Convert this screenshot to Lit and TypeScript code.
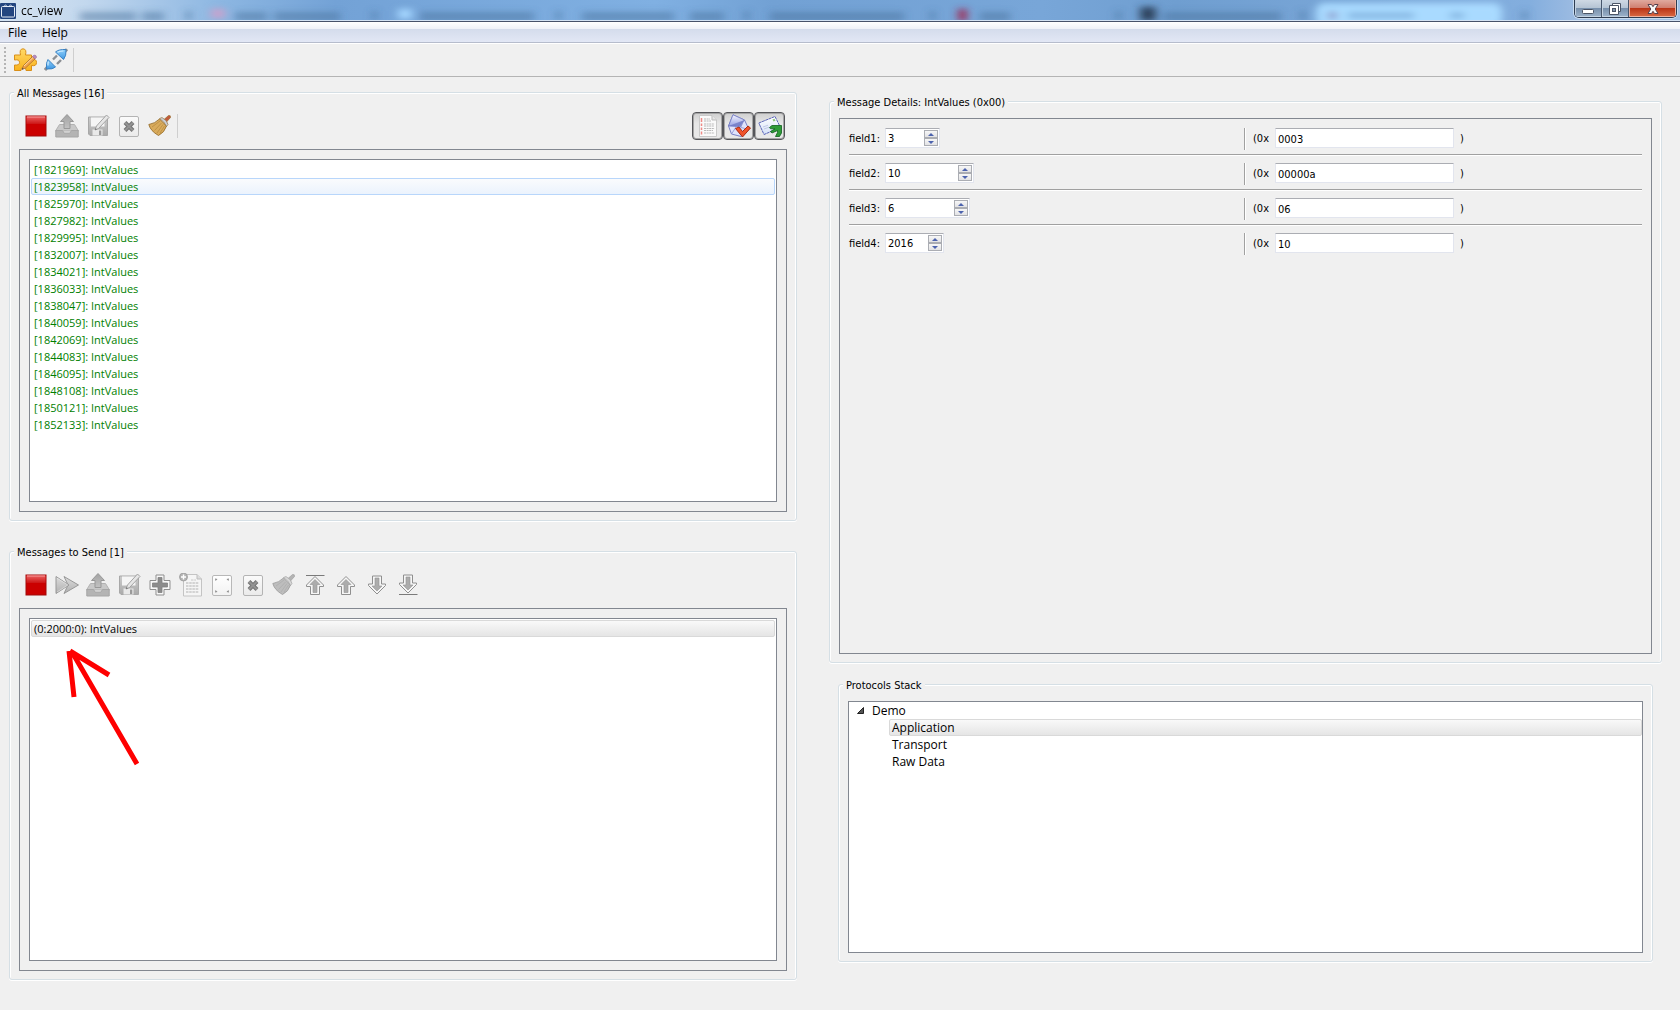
import { LitElement, html, css, svg, nothing } from "lit";
import { customElement, property, state } from "lit/decorators.js";
import { classMap } from "lit/directives/class-map.js";
import { live } from "lit/directives/live.js";

const grad = (id: string, from: string, to: string) => svg`
  <linearGradient id=${id} x1="0" y1="0" x2="0" y2="1">
    <stop offset="0" stop-color=${from}></stop><stop offset="1" stop-color=${to}></stop>
  </linearGradient>`;

const upArrow = svg`
  <path d="M12 3.500 L20.500 12 V13.500 H16.500 V21.500 H7.500 V13.500 H3.500 V12 Z" fill="#f6f6f6" stroke="#8f8f8f" stroke-linejoin="round"/>
  <path d="M12 6.500 L17 11.500 H14 V19.500 H10 V11.500 H7 Z" fill="#acacac" stroke="#949494" stroke-width=".6"/>`;

const broom = (bristle: string, line: string, band: string, handle: string) => svg`
  <path d="M16 5.500 L20.500 1.500 Q23 1 22.500 3.500 L18.500 8 Z" fill=${handle} stroke=${line} stroke-width=".6"/>
  <path d="M11.500 5 Q7 9.500 .800 10.500 Q2.500 17 10.500 21.500 Q16.500 18.500 18.500 12 Z" fill=${bristle} stroke=${line} stroke-width=".8"/>
  <path d="M12 7 L4 13 M13.500 9 L6.500 16.500 M15 10.500 L9 19 M16.500 12 L12 19" stroke=${line} stroke-width=".6" opacity=".6"/>
  <path d="M11.500 4.500 L14 3.500 Q19.500 6.500 20 10.500 L18.500 12.500 Q16.500 7.500 11.500 4.500 Z" fill=${band} stroke=${line} stroke-width=".6"/>`;

const icons: Record<string, unknown> = {
  puzzle: svg`
    <defs>${grad("pz", "#ffd968", "#f9b21c")}</defs>
    <path d="M1.500 7 H7.500 Q6 1 10 .800 Q14 1 12.500 7 H18.500 V11.500 Q23.500 10.500 23.500 14.500 Q23.500 18.500 18.500 17.500 V22.500 H13 Q13.500 19.500 10.500 19.500 Q7.500 19.500 8 22.500 H1.500 V17 Q6.500 17.500 6.500 14.500 Q6.500 11 1.500 12 Z" fill="url(#pz)" stroke="#d98f18" stroke-linejoin="round"/>
    <path d="M9 21.500 L10.500 17.500 L19.500 8.500 L22 11 L12.500 20 Z" fill="#f2a24a" stroke="#a3672a" stroke-width=".7"/>
    <path d="M11 18 L20.300 9.300" stroke="#fde0a8" stroke-width=".9"/>
    <path d="M19.500 8.500 L21 7 Q23.500 7 23.700 9.300 L22 11 Z" fill="#b98ac0" stroke="#8f6b96" stroke-width=".5"/>
    <path d="M9 21.500 L9.600 19.800 L10.700 20.900 Z" fill="#444"/>`,
  plug: svg`
    <defs>${grad("pg", "#8fd0fb", "#3f97e2")}</defs>
    <path d="M9 11.500 L13 7.500 M13 16 L17 12" stroke="#8b8f94" stroke-width="2.400"/>
    <path d="M20.500 4 L23 1.200" stroke="#8b8f94" stroke-width="3"/>
    <path d="M3.500 19 L1 22" stroke="#8b8f94" stroke-width="3"/>
    <path d="M11.500 4 Q14.500 1.200 22 1.500 Q22.500 8 19.500 11.500 Z" fill="url(#pg)" stroke="#3a82c4" stroke-linejoin="round"/>
    <path d="M4 11.500 L11.500 19 Q9 21.500 2.500 21 Q1.800 14.500 4 11.500 Z" fill="url(#pg)" stroke="#3a82c4" stroke-linejoin="round"/>
    <path d="M13.500 4.300 Q16 3 19.500 3 M4.300 13.500 Q3.800 15.500 4 17.500" stroke="#d3efff" stroke-width="1.200" fill="none"/>`,
  stop: svg`
    <defs>${grad("sp", "#ea6060", "#cc1414")}</defs>
    <rect x="2" y="2" width="20" height="20" fill="#cb0000" stroke="#a00a0a"/>
    <rect x="2.500" y="2.500" width="19" height="7.500" fill="url(#sp)"/>
    <path d="M3 3 H21" stroke="#f59a9a"/>`,
  load: svg`
    <defs>${grad("ld", "#a2a2a2", "#c2c2c2")}</defs>
    <path d="M4.500 10.500 H19.500 L23.500 17 H.500 Z" fill="#c8c8c8" stroke="#b2b2b2"/>
    <path d="M.800 16.500 H7.500 L9 19 H15 L16.500 16.500 H23.200 V23 H.800 Z" fill="#b4b4b4" stroke="#a6a6a6"/>
    <path d="M12 .500 L18.500 7.500 H15 V14.500 H9 V7.500 H5.500 Z" fill="url(#ld)" stroke="#989898"/>`,
  save: svg`
    <defs>${grad("sv", "#cccccc", "#aaaaaa")}</defs>
    <path d="M2.500 3 H21.500 V21.500 H4 L2.500 20 Z" fill="url(#sv)" stroke="#a8a8a8"/>
    <path d="M5 3.500 H18.500 V12.500 H5 Z" fill="#f5f5f5"/>
    <path d="M6.500 15.500 H16.500 V21.500 H6.500 Z" fill="#e9e9e9"/><path d="M13 16.500 H15.300 V21 H13 Z" fill="#9a9a9a"/>
    <path d="M9 16 L10.500 12 L20.500 1 L23 3.500 L12.500 14.500 Z" fill="#e6e6e6" stroke="#9b9b9b" stroke-width=".9"/>
    <path d="M9 16 L9.700 14.200 L10.900 15.300 Z" fill="#666"/>`,
  remove: svg`
    <defs>${grad("rm", "#fbfbfb", "#eaeaea")}</defs>
    <rect x="2.500" y="2.500" width="19" height="20" rx="1.500" fill="url(#rm)" stroke="#b4b4b4"/>
    <path d="M8 8.500 L16 16.500 M16 8.500 L8 16.500" stroke="#737373" stroke-width="4"/>
    <path d="M8 8.500 L16 16.500 M16 8.500 L8 16.500" stroke="#939393" stroke-width="2"/>`,
  broom: broom("#d9ab5c", "#8f6420", "#c9ced8", "#c25b3c"),
  broomOff: broom("#bdbdbd", "#999999", "#d6d6d6", "#b4b4b4"),
  forward: svg`
    <defs>${grad("fw", "#dcdcdc", "#b0b0b0")}</defs>
    <path d="M1 3.500 L14 12 L1 20.500 Z M9 3.500 L23.500 12 L9 20.500 L13 12 Z" fill="url(#fw)" stroke="#989898" stroke-linejoin="round"/>
    <path d="M2 5 L13 12 L2 19" fill="none" stroke="#fff" stroke-width=".7" opacity=".6"/>`,
  add: svg`
    <path d="M8 2 H16 V7.500 H22 V16.500 H16 V22 H8 V16.500 H2 V7.500 H8 Z" fill="#f8f8f8" stroke="#8f8f8f" stroke-linejoin="round"/>
    <path d="M10 4.500 H14 V10 H19.500 V14 H14 V19.500 H10 V14 H4.500 V10 H10 Z" fill="#8c8c8c" stroke="#808080" stroke-width=".8"/>`,
  addDoc: svg`
    <path d="M4.500 1.500 H18 L22.500 6 V23 H4.500 Z" fill="#f5f5f5" stroke="#c4c4c4"/>
    <path d="M18 1.500 V6 H22.500" fill="#ddd" stroke="#bdbdbd"/>
    <path d="M7 10 H20 M7 13 H20 M7 16 H20 M7 19 H20" stroke="#c8c8c8" stroke-width="1.300" stroke-dasharray="2.500 .700"/>
    <path d="M12 7 H17" stroke="#c8c8c8" stroke-dasharray="2.500 .700"/>
    <circle cx="4.500" cy="4" r="4" fill="#b4b4b4" stroke="#9a9a9a" stroke-width=".8"/>
    <path d="M2 4 H7 M4.500 1.500 V6.500" stroke="#fff" stroke-width="1.400"/>`,
  frame: svg`
    <defs>${grad("fm", "#ffffff", "#f2f2f2")}</defs>
    <rect x="2.500" y="2.500" width="19" height="20" rx="1.500" fill="url(#fm)" stroke="#b8b8b8"/>
    <path d="M5 5.500 l2.500 .500 l-2 2 z M19 5.500 l-2.500 .500 l2 2 z M5 19.500 l2.500 -.500 l-2 -2 z M19 19.500 l-2.500 -.500 l2 -2 z" fill="#888"/>`,
  top: svg`<path d="M3 2.500 H21.500" stroke="#7a7a7a"/>${upArrow}`,
  up: upArrow,
  down: svg`<g transform="matrix(1 0 0 -1 0 24.500)">${upArrow}</g>`,
  bottom: svg`<g transform="matrix(1 0 0 -1 0 23.500)">${upArrow}</g><path d="M3 21.500 H21.500" stroke="#7a7a7a"/>`,
  list: svg`
    <path d="M3.500 1.500 H16 L20.500 6 V22.500 H3.500 Z" fill="#fafafa" stroke="#c9c9c9"/>
    <path d="M16 1.500 V6 H20.500" fill="#e6e6e6" stroke="#bbb"/>
    <path d="M5.500 4 V8 M5.500 9.500 V12 M5.500 13.500 V16 M5.500 17.500 V20.500" stroke="#ee8a86" stroke-width="1.500"/>
    <path d="M8 5 H14 M8 7 H15 M8 10 H18.500 M8 12 H18 M8 14.500 H18.500 M8 16.500 H17 M8 19 H18.500" stroke="#b9b9b9" stroke-dasharray="2 .600"/>`,
  received: svg`
    <defs>${grad("rc", "#f4f5ff", "#9aa4e2")}</defs>
    <path d="M6 .800 L17.500 6 L22 15.500 L14 22.500 L4.500 20 L1.500 12 Z" fill="#dfe3fb" stroke="#6b74c0" stroke-linejoin="round" stroke-width=".9"/>
    <path d="M6 .800 L17.500 6 L11.500 12 L1.500 12 Z" fill="url(#rc)" stroke="#6b74c0" stroke-width=".7" stroke-linejoin="round"/>
    <path d="M1.500 12 L17.500 6 L14 13.500 Z" fill="#6f79c4" opacity=".8"/>
    <path d="M4.500 20 L10 11.500 M14 13.500 L22 15.500" stroke="#8a92d2" stroke-width=".8"/>
    <path d="M8.500 14.500 L12 13 L15.500 17.500 L21 12 L23.500 14 L15.500 23 Z" fill="#f0532a" stroke="#a31f08" stroke-width=".9" stroke-linejoin="round"/>`,
  sent: svg`
    <defs>${grad("sn", "#ffffff", "#d4e0f8")}</defs>
    <path d="M.800 9 L17 2.500 L22.500 13.500 L6 20.500 Z" fill="url(#sn)" stroke="#5b66b8" stroke-linejoin="round" stroke-dasharray="3 .500"/>
    <path d="M14.500 5.500 L16.500 4.800 L17.500 6.700 L15.500 7.500 Z" fill="#8fc47e"/>
    <path d="M5 13 L10 11.200 M6 15 L11 13.200" stroke="#b6bede" stroke-width=".8"/>
    <path d="M11.500 13.500 L14 11.500 H23.500 V19 L21.500 22.500 L17.500 22.500 L19.500 18.500 V16.500 L14 19 L12.500 17.500 L17 14.800 H12.500 Z" fill="#2e9b37" stroke="#0e5f1c" stroke-width=".8" stroke-linejoin="round"/>`,
};

@customElement("tool-button")
class ToolButton extends LitElement {
  @property() icon = "";
  @property() label = "";
  @property({ type: Boolean }) toggled = false;

  static styles = css`
    :host { display: block; }
    .button {
      display: grid; place-items: center; box-sizing: border-box;
      width: 31px; height: 28px; padding: 0; margin: 0;
      border: 1px solid transparent; border-radius: 4px; background: none;
    }
    .toggled {
      border: 1px solid #55565a;
      background: linear-gradient(#cfcfcf, #e6e6e6 40%, #e9e9e9);
      box-shadow: inset 0 0 0 1px #a5a5a5;
    }
    .icon { display: block; width: 24px; height: 24px; }
  `;

  render() {
    return html`
      <button class=${classMap({ button: true, toggled: this.toggled })} aria-label=${this.label}
        aria-pressed=${this.toggled ? "true" : nothing}>
        <svg class="icon" viewBox="0 0 24 24" fill="none" aria-hidden="true">${icons[this.icon]}</svg>
      </button>`;
  }
}

@customElement("group-box")
class GroupBox extends LitElement {
  @property() heading = "";

  static styles = css`
    :host { display: flex; min-width: 0; min-height: 0; }
    .box {
      flex: 1; min-width: 0; display: flex; flex-direction: column;
      border: 1px solid #d5dfe5; border-radius: 3px; padding: 0 9px 8px;
      box-shadow: inset 1px 1px 0 #fff, inset -1px 0 0 #fff, 0 1px 0 #fff;
    }
    .heading {
      align-self: flex-start; margin: -7px 0 0 -5px; padding: 0 3px;
      font: 11px/16px "DejaVu Sans Condensed", "DejaVu Sans", sans-serif;
      color: #000; background: #f0f0f0; white-space: nowrap;
    }
  `;

  render() {
    return html`<section class="box" aria-label=${this.heading}>
      <h2 class="heading">${this.heading}</h2><slot></slot>
    </section>`;
  }
}

@customElement("title-bar")
class TitleBar extends LitElement {
  static styles = css`
    :host { display: block; }
    .bar {
      position: relative; display: flex; align-items: flex-start; height: 20px; overflow: hidden;
      background: #75a3d6; border-bottom: 1px solid #d3e2f3;
    }
    .edge { height: 1px; background: #47526a; }
    .glass { position: absolute; inset: 0; width: 100%; height: 100%; }
    .app { position: relative; flex: 1; display: flex; gap: 5px; align-items: center; padding-top: 3px; }
    .logo { display: block; width: 16px; height: 16px; }
    .name { margin: 0; font: 12px/16px "Open Sans", "Noto Sans", sans-serif; color: #000; }
    .controls {
      position: relative; display: flex; margin-right: 3px; box-sizing: border-box; height: 18px;
      border: 1px solid #2f3d52; border-top: 0; border-radius: 0 0 5px 5px; overflow: hidden;
      box-shadow: 0 0 0 1px #c9dcf0;
    }
    .control {
      display: grid; place-items: center; box-sizing: border-box; width: 27px; height: 17px; padding: 0; margin: 0; border: 0;
      border-right: 1px solid #47566b;
      background: linear-gradient(#cfd9e4, #b4c3d3 48%, #7890ac 50%, #9db3ca);
      box-shadow: inset 1px -1px 0 #c4d3e2;
    }
    .close {
      width: 47px; border-right: 0;
      background: linear-gradient(#e0a99e, #d07f70 45%, #bb3517 50%, #d96b45);
      box-shadow: inset 1px -1px 0 #eeb2a0, inset -1px 0 0 #eeb2a0;
    }
    .glyph { display: block; width: 14px; height: 14px; }
  `;

  render() {
    const words = [[80, 56], [142, 22], [235, 32], [274, 66], [420, 114], [582, 92], [690, 34], [770, 134], [980, 30], [1163, 118]];
    const marks = [186, 372, 556, 744, 930, 1116, 1300, 1522];
    return html`
      <header class="bar">
        <svg class="glass" viewBox="0 0 1680 20" preserveAspectRatio="none" aria-hidden="true">
          <defs>
            <linearGradient id="sky">
              <stop offset="0" stop-color="#d5e3f1"/><stop offset=".05" stop-color="#c3d8ee"/>
              <stop offset=".13" stop-color="#8db7e2"/><stop offset=".2" stop-color="#73a2d6"/>
              <stop offset=".39" stop-color="#80b0e2"/><stop offset=".46" stop-color="#72a1d4"/>
              <stop offset=".62" stop-color="#78a6d8"/><stop offset=".7" stop-color="#6f9ed0"/>
              <stop offset=".91" stop-color="#83aede"/><stop offset=".94" stop-color="#9ebce2"/>
              <stop offset="1" stop-color="#9fc0e4"/>
            </linearGradient>
            <filter id="soft" x="-20%" y="-100%" width="140%" height="300%"><feGaussianBlur stdDeviation="4 3"/></filter>
          </defs>
          <rect width="1680" height="20" fill="url(#sky)"/>
          <g filter="url(#soft)">
            <rect x="1316" y="3" width="186" height="24" rx="8" fill="#a9daff"/>
            ${words.map(([x, w]) => svg`<rect x=${x} y="12" width=${w} height="9" fill="#456f9c" opacity=".5"/>`)}
            ${marks.map((x) => svg`<rect x=${x} y="11" width="5" height="9" fill="#456f9c" opacity=".6"/>`)}
            <rect x="211" y="9" width="14" height="9" fill="#c9a2cc"/>
            <rect x="398" y="9" width="14" height="10" fill="#a4d6ff"/>
            <rect x="958" y="9" width="9" height="12" fill="#9c2e5c"/>
            <rect x="1140" y="7" width="16" height="14" fill="#2d4560"/>
            <rect x="1328" y="12" width="9" height="7" fill="#8f9ccc"/>
            <rect x="1348" y="13" width="66" height="5" fill="#6b9bcd" opacity=".7"/>
            <rect x="1450" y="13" width="14" height="5" fill="#6b9bcd" opacity=".7"/>
          </g>
        </svg>
        <div class="app">
          <svg class="logo" viewBox="0 0 16 16" aria-hidden="true">
            <rect width="16" height="16" rx="1" fill="#23457f"/>
            <rect x="1.500" y="3.500" width="13" height="10.500" rx="1" fill="none" stroke="#e4ebf5"/>
            <path d="M4.500 3 a1 1 0 0 1 2 0 M9.500 3 a1 1 0 0 1 2 0" fill="none" stroke="#b9c9e2"/>
          </svg>
          <h1 class="name">cc_view</h1>
        </div>
        <div class="controls">
          <button class="control" aria-label="Minimize">
            <svg class="glyph" viewBox="0 0 14 14"><rect x="1.500" y="7.500" width="11" height="4" rx="1" fill="#fff" stroke="#4b5566"/></svg>
          </button>
          <button class="control" aria-label="Restore">
            <svg class="glyph" viewBox="0 0 14 14" stroke="#4b5566" fill="#fff">
              <path d="M4.500 1.500 H12.500 V9.500 H4.500 Z"/><path d="M1.500 3.500 H10.500 V12.500 H1.500 Z"/>
              <rect x="4.500" y="6.500" width="3" height="3" fill="#8598ae"/>
            </svg>
          </button>
          <button class="control close" aria-label="Close">
            <svg class="glyph" viewBox="0 0 14 14" stroke-linejoin="round">
              <path d="M2 2.500 H5.500 L7 4.700 L8.500 2.500 H12 L9.200 7 L12 11.500 H8.500 L7 9.300 L5.500 11.500 H2 L4.800 7 Z" fill="#f8f8f8" stroke="#56404c"/>
            </svg>
          </button>
        </div>
      </header>
      <div class="edge"></div>`;
  }
}

interface Field { name: string; value: string; hex: string; size: "s" | "m" | "l" | "xl"; }

@customElement("field-row")
class FieldRow extends LitElement {
  @property({ attribute: false }) field!: Field;

  static styles = css`
    :host { display: block; }
    .row {
      display: grid; grid-template-columns: 395fr 398fr; height: 20px;
      font: 11px/22px "DejaVu Sans Condensed", "DejaVu Sans", sans-serif; color: #000;
    }
    .decimal, .hex { display: flex; min-width: 0; }
    .hex { border-left: 1px solid #a0a0a0; box-shadow: inset 1px 0 0 #fff; padding-left: 8px; }
    .name { width: 36px; }
    .prefix { width: 22px; }
    .suffix { padding-left: 6px; }
    .input {
      box-sizing: border-box; height: 20px; margin: 0; border: 1px solid #e2e5ee; border-top-color: #abadb3;
      border-radius: 1px; background: #fff; color: #000; font: inherit; line-height: 16px; padding: 2px 2px 0; outline: 0;
    }
    .text { width: 179px; }
    .spin {
      display: flex; box-sizing: border-box; height: 20px; padding: 1px; background: #fff;
      border: 1px solid #e2e5ee; border-top-color: #abadb3; border-radius: 1px;
    }
    .s { width: 55px; } .m { width: 59px; } .l { width: 85px; } .xl { width: 89px; }
    .number {
      flex: 1; min-width: 0; border: 0; padding: 2px 0 0 1px; margin: 0; background: none; outline: 0;
      font: inherit; line-height: 14px; color: #000; appearance: textfield; -moz-appearance: textfield;
    }
    .number::-webkit-inner-spin-button { appearance: none; margin: 0; }
    .steps { display: flex; flex-direction: column; width: 14px; height: 16px; }
    .step {
      display: grid; place-items: center; box-sizing: border-box; width: 14px; height: 8px; padding: 0; margin: 0;
      border: 1px solid #abadb3; background: linear-gradient(#f7f7f7, #e2e2e4);
    }
    .mark { display: block; width: 6px; height: 3px; }
  `;

  render() {
    const { name, value, hex, size } = this.field;
    return html`
      <div class="row">
        <div class="decimal">
          <label class="name" for="dec">${name}:</label>
          <span class="spin ${size}">
            <input class="number" id="dec" type="number" .value=${live(value)} />
            <span class="steps">
              <button class="step" aria-label="Increase" tabindex="-1" @click=${() => this.step(1)}><svg class="mark" viewBox="0 0 6 3"><path d="M3 0 L6 3 H0 Z" fill="#4c63ae"/></svg></button>
              <button class="step" aria-label="Decrease" tabindex="-1" @click=${() => this.step(-1)}><svg class="mark" viewBox="0 0 6 3"><path d="M3 3 L6 0 H0 Z" fill="#4c63ae"/></svg></button>
            </span>
          </span>
        </div>
        <div class="hex">
          <label class="prefix" for="hex">(0x</label>
          <input class="input text" id="hex" type="text" .value=${hex} />
          <span class="suffix">)</span>
        </div>
      </div>`;
  }

  private step(by: number) {
    this.field = { ...this.field, value: String(Number(this.field.value) + by) };
  }
}

@customElement("app-root")
class AppRoot extends LitElement {
  @state() private hovered = "1823958";

  private stamps = ["1821969", "1823958", "1825970", "1827982", "1829995", "1832007", "1834021", "1836033",
    "1838047", "1840059", "1842069", "1844083", "1846095", "1848108", "1850121", "1852133"];

  private fields: Field[] = [
    { name: "field1", value: "3", hex: "0003", size: "s" },
    { name: "field2", value: "10", hex: "00000a", size: "xl" },
    { name: "field3", value: "6", hex: "06", size: "l" },
    { name: "field4", value: "2016", hex: "10", size: "m" },
  ];

  private receiveTools = [["stop", "Stop"], ["load", "Load"], ["save", "Save"], ["remove", "Delete"], ["broom", "Clear"]];
  private filterTools = [["list", "Show all"], ["received", "Show received"], ["sent", "Show sent"]];
  private sendTools = [["stop", "Stop"], ["forward", "Send all"], ["load", "Load"], ["save", "Save"], ["add", "Add"],
    ["addDoc", "New message"], ["frame", "Edit"], ["remove", "Delete"], ["broomOff", "Clear"],
    ["top", "Move to top"], ["up", "Move up"], ["down", "Move down"], ["bottom", "Move to bottom"]];

  static styles = css`
    :host { display: block; }
    .window {
      display: flex; flex-direction: column; min-height: 100vh; background: #f0f0f0; color: #000;
      font: 12px/17px "Open Sans", "Noto Sans", sans-serif;
    }
    .menu {
      display: flex; gap: 15px; height: 20px; padding-left: 8px; border-bottom: 1px solid #b6bccc;
      background: linear-gradient(#fff, #eef1f8 7px, #d4dcec 7px, #e2e7f5);
      box-shadow: 0 1px 0 #fff;
    }
    .menu-item { padding: 0; margin: 0; border: 0; background: none; font: inherit; line-height: 22px; color: #000; }
    .main-tools {
      display: flex; align-items: center; height: 33px; padding-left: 4px; border-bottom: 1px solid #b4b4b4;
    }
    .grip { width: 2px; height: 26px; margin-right: 3px; background: repeating-linear-gradient(#b4b4b4 0 2px, transparent 2px 4px); }
    .rule { width: 1px; height: 24px; margin-left: 2px; background: #cfcfcf; }
    .content {
      flex: 1; display: grid; grid-template-columns: minmax(0, 788fr) minmax(0, 833fr); column-gap: 32px; padding: 0 18px 0 9px;
    }
    .left { display: flex; flex-direction: column; gap: 30px; padding: 15px 0 30px; }
    .right { display: flex; flex-direction: column; gap: 21px; padding: 24px 0 48px; }
    .half { flex: 1 1 0; }
    .details { flex: 281 1 0; }
    .protocols { flex: 139 1 0; margin: 0 9px; }
    .tools { display: flex; align-items: center; height: 28px; margin: 10px 2px 9px 1px; }
    .filters { display: flex; margin-left: auto; }
    .frame { flex: 1; display: flex; box-sizing: border-box; border: 1px solid #828790; padding: 9px; }
    .list {
      position: relative; flex: 1; min-width: 0; box-sizing: border-box; margin: 0; padding: 1px; list-style: none;
      border: 1px solid #828790; background: #fff; font-size: 11px;
    }
    .item { box-sizing: border-box; height: 17px; line-height: 15px; padding: 0 2px; border: 1px solid transparent; border-radius: 2px; cursor: default; }
    .received { color: #008000; }
    .hovered { border-color: #b8d6fb; background: linear-gradient(#fafbfd, #ebf3fd); }
    .selected { border-color: #d9d9d9; background: linear-gradient(#f9f9f9, #e5e5e5); }
    .pointer { position: absolute; left: 36px; top: 29px; width: 76px; height: 120px; pointer-events: none; }
    .panel { flex: 1; box-sizing: border-box; margin-top: 7px; border: 1px solid #828790; padding: 9px 9px 0; }
    .divider { height: 1px; margin: 6px 0 8px; border: 0; background: #a0a0a0; box-shadow: 0 1px 0 #fff; }
    .tree {
      flex: 1; box-sizing: border-box; margin: 7px 0 0; padding: 0; list-style: none; border: 1px solid #828790; background: #fff;
    }
    .root { display: flex; align-items: center; gap: 8px; height: 17px; padding-left: 8px; }
    .arrow { display: block; width: 7px; height: 7px; }
    .children { margin: 0; padding: 0 0 0 40px; list-style: none; }
  `;

  private tools(list: string[][], toggled = false) {
    return list.map(([icon, label]) => html`<tool-button icon=${icon} label=${label} ?toggled=${toggled}></tool-button>`);
  }

  render() {
    return html`
      <div class="window">
        <title-bar></title-bar>
        <nav class="menu" aria-label="Menu">
          <button class="menu-item">File</button><button class="menu-item">Help</button>
        </nav>
        <div class="main-tools">
          <span class="grip"></span>
          ${this.tools([["puzzle", "Plugin configuration"], ["plug", "Connect"]])}
          <span class="rule"></span>
        </div>
        <main class="content">
          <div class="left">
            <group-box class="half" heading="All Messages [16]">
              <div class="tools">
                ${this.tools(this.receiveTools)}<span class="rule"></span>
                <div class="filters">${this.tools(this.filterTools, true)}</div>
              </div>
              <div class="frame">
                <ul class="list">
                  ${this.stamps.map((s) => html`
                    <li class=${classMap({ item: true, received: true, hovered: s === this.hovered })}
                      @mouseenter=${() => (this.hovered = s)}>[${s}]: IntValues</li>`)}
                </ul>
              </div>
            </group-box>
            <group-box class="half" heading="Messages to Send [1]">
              <div class="tools">${this.tools(this.sendTools)}</div>
              <div class="frame">
                <ul class="list">
                  <li class="item selected">(0:2000:0): IntValues</li>
                  <svg class="pointer" viewBox="0 0 76 120" fill="none" stroke="#fe0000" stroke-width="5" aria-hidden="true">
                    <path d="M71 116 L6 4 M3 3 L8 49 M4 3 L43 27"/>
                  </svg>
                </ul>
              </div>
            </group-box>
          </div>
          <div class="right">
            <group-box class="details" heading="Message Details: IntValues (0x00)">
              <div class="panel">
                ${this.fields.map((f, i) => html`
                  ${i ? html`<hr class="divider" />` : nothing}
                  <field-row .field=${f}></field-row>`)}
              </div>
            </group-box>
            <group-box class="protocols" heading="Protocols Stack">
              <ul class="tree" role="tree">
                <li role="treeitem" aria-expanded="true">
                  <div class="root">
                    <svg class="arrow" viewBox="0 0 7 7" aria-hidden="true"><path d="M6.500 .500 V6.500 H.500 Z" fill="#555" stroke="#222"/></svg>
                    <span>Demo</span>
                  </div>
                  <ul class="children" role="group">
                    <li class="item selected" role="treeitem">Application</li>
                    <li class="item" role="treeitem">Transport</li>
                    <li class="item" role="treeitem">Raw Data</li>
                  </ul>
                </li>
              </ul>
            </group-box>
          </div>
        </main>
      </div>`;
  }
}
